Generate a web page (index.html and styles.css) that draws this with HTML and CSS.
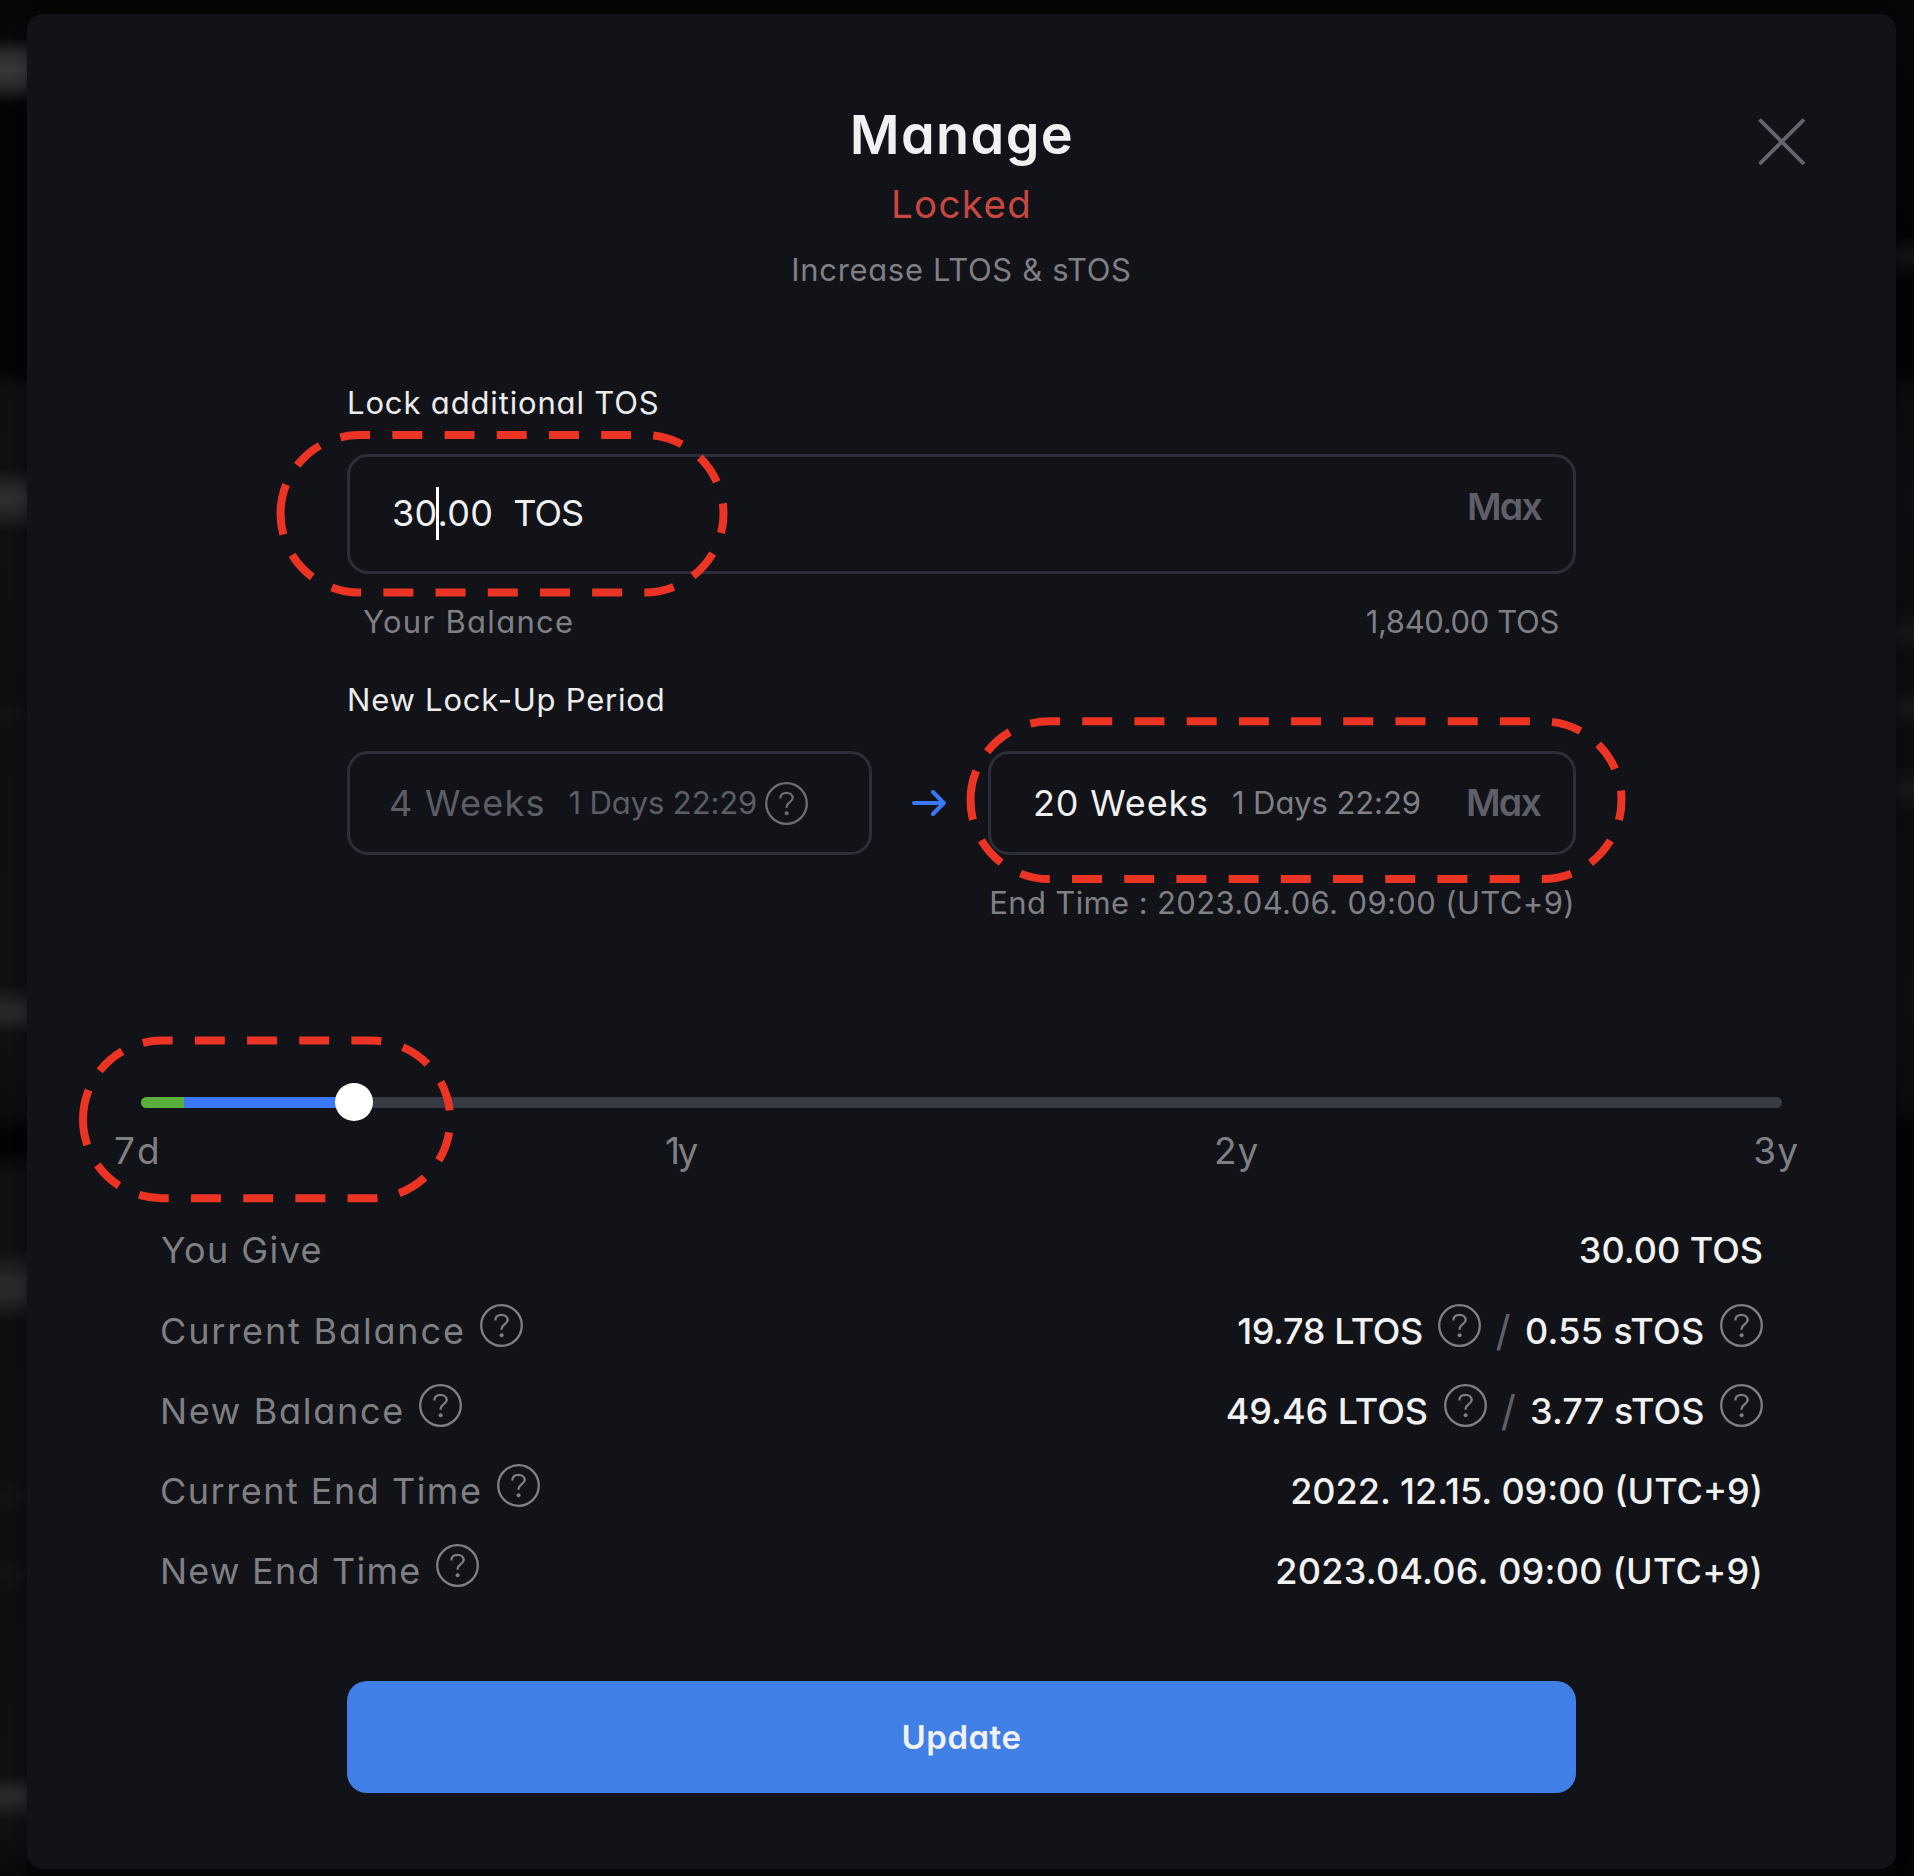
FILE: index.html
```html
<!DOCTYPE html>
<html lang="en">
<head>
<meta charset="utf-8">
<title>Manage</title>
<link rel="stylesheet" href="styles.css">
</head>
<body>
<svg class="defs" aria-hidden="true">
  <symbol id="help" viewBox="0 0 43 43">
    <circle cx="21.5" cy="21.5" r="20.3" fill="none" stroke="currentColor" stroke-width="2.3"/>
    <path d="M15.4 16.6V15.8C15.4 12.8 18 10.8 21.5 10.8S27.7 13 27.7 16.1C27.7 20 21.6 20.4 21.6 24.8V25.8" fill="none" stroke="currentColor" stroke-width="2.3"/>
    <circle cx="21.6" cy="31.2" r="2" fill="currentColor"/>
  </symbol>
</svg>
<div class="page">
  <div class="backdrop backdrop-left"></div>
  <main class="modal">
    <svg class="close" viewBox="0 0 48 48"><path d="M1.5 1.5 46 46M46 1.5 1.5 46"/></svg>
    <header class="head">
      <h1 class="title">Manage</h1>
      <p class="status">Locked</p>
      <p class="subtitle">Increase LTOS &amp; sTOS</p>
    </header>

    <section class="form">
      <h2 class="label label-amount">Lock additional TOS</h2>
      <div class="amount">
        <span class="value amount-int">30</span><span class="caret"></span><span class="value amount-dec">.00</span>
        <span class="value unit">TOS</span>
        <button class="max max-amount">Max</button>
      </div>
      <div class="balance"><span class="balance-name">Your Balance</span><span class="balance-value">1,840.00 TOS</span></div>
      <h2 class="label label-period">New Lock-Up Period</h2>
      <div class="periods">
        <div class="period period-old">
          <span class="weeks">4 Weeks</span><span class="days">1 Days 22:29</span><svg class="help"><use href="#help"/></svg>
        </div>
        <svg class="arrow" viewBox="0 0 34 26"><path d="M2 13H31.5M21 2 31.8 13 21 24"/></svg>
        <div class="period period-new">
          <span class="weeks">20 Weeks</span><span class="days">1 Days 22:29</span><button class="max">Max</button>
        </div>
      </div>
      <p class="end-time">End Time : 2023.04.06. 09:00 (UTC+9)</p>
    </section>

    <section class="slider">
      <div class="track"><span class="track-locked"></span><span class="track-new"></span><span class="thumb"></span></div>
      <div class="marks"><span class="mark-7d">7d</span><span class="mark-1y">1y</span><span class="mark-2y">2y</span><span class="mark-3y">3y</span></div>
    </section>

    <section class="summary">
      <div class="row"><span class="give">You Give</span><span class="figure">30.00 TOS</span></div>
      <div class="row"><span class="balance-current">Current Balance</span><svg class="help"><use href="#help"/></svg>
        <span class="figure tight">19.78 LTOS</span><svg class="help"><use href="#help"/></svg><span class="slash">/</span><span class="staked loose">0.55 sTOS</span><svg class="help"><use href="#help"/></svg></div>
      <div class="row"><span class="balance-new">New Balance</span><svg class="help"><use href="#help"/></svg>
        <span class="figure">49.46 LTOS</span><svg class="help"><use href="#help"/></svg><span class="slash">/</span><span class="staked">3.77 sTOS</span><svg class="help"><use href="#help"/></svg></div>
      <div class="row"><span class="end-current">Current End Time</span><svg class="help"><use href="#help"/></svg><span class="figure">2022. 12.15. 09:00 (UTC+9)</span></div>
      <div class="row"><span class="end-new">New End Time</span><svg class="help"><use href="#help"/></svg><span class="figure date-new">2023.04.06. 09:00 (UTC+9)</span></div>
    </section>

    <button class="update">Update</button>
  </main>
  <div class="backdrop backdrop-right"></div>

  <svg class="highlights" viewBox="0 0 1914 1876">
    <path d="M280.5 513.75A78.75 78.75 0 0 1 359.25 435H644.75A78.75 78.75 0 0 1 644.75 592.5H359.25A78.75 78.75 0 0 1 280.5 513.75"/>
    <path d="M970.5 800.2A78.9 78.9 0 0 1 1049.4 721.3H1542.6A78.9 78.9 0 0 1 1542.6 879.1H1049.4A78.9 78.9 0 0 1 970.5 800.2"/>
    <path d="M83 1119.4A78.8 78.8 0 0 1 161.8 1040.6H371.5A78.8 78.8 0 0 1 371.5 1198.2H161.8A78.8 78.8 0 0 1 83 1119.4"/>
  </svg>
</div>
</body>
</html>
```
FILE: styles.css
```css
* { box-sizing: border-box; margin: 0; padding: 0; }

body {
  background: #060606;
  font-family: Inter, "Noto Sans", sans-serif;
  font-feature-settings: "cv11";
  font-weight: 400;
  color: #7f7f84;
  white-space: nowrap;
}

button { background: none; border: 0; font: inherit; font-feature-settings: inherit; }

.defs { display: none; }

.page {
  position: relative;
  display: grid;
  grid-template-columns: 27px 1869px 18px;
  height: 1876px;
  overflow: hidden;
}

.backdrop-left {
  background: linear-gradient(#060606 0, #080808 38px, #2c2c2c 54px, #383838 69px, #2c2c2c 84px, #080808 102px, #040404 110px, #040404 370px, #0d0f11 390px, #0e1011 468px, #232425 485px, #2e2f30 499px, #232425 513px, #0e1011 532px, #0c0e10 700px, #101214 712px, #0d0f10 730px, #0e1011 985px, #262728 1008px, #262728 1016px, #0e1011 1035px, #0c0d0e 1110px, #030303 1135px, #030303 1150px, #0e1011 1175px, #0e1011 1250px, #28292a 1280px, #28292a 1294px, #0c0e0f 1322px, #0d0f10 1480px, #111213 1497px, #0c0e0f 1515px, #0c0e0f 1555px, #111213 1575px, #0c0e0f 1595px, #0e1011 1775px, #28292b 1793px, #28292b 1799px, #101113 1820px, #08090a 1876px);
}

.backdrop-right {
  background: linear-gradient(#070707 0, #040404 235px, #131313 257px, #040404 280px, #040404 370px, #0a0c0d 395px, #0d0f13 496px, #0b0d0e 610px, #161717 634px, #0b0d0e 655px, #0c0e0f 690px, #161717 708px, #0b0d0e 730px, #0b0d0e 765px, #171818 789px, #0b0d0e 812px, #0d0f11 1010px, #0a0c0d 1100px, #040404 1130px, #040404 1876px);
}

.modal {
  position: relative;
  display: flex;
  flex-direction: column;
  align-items: center;
  margin-top: 14px;
  height: 1855px;
  border-radius: 16px;
  background: #121318;
  box-shadow: 0 0 14px rgba(0, 0, 0, .4);
}

.close {
  position: absolute;
  top: 104px;
  right: 90.5px;
  width: 48px;
  height: 48px;
  fill: none;
  stroke: #65656f;
  stroke-width: 3.8;
}

.head { display: flex; flex-direction: column; align-items: center; padding-top: 89px; }
.title { font-size: 54px; line-height: 64px; font-weight: 600; letter-spacing: 1.4px; padding-left: 1px; color: #f1f1f1; }
.status { margin-top: 14px; font-size: 38.5px; line-height: 46px; letter-spacing: 1.35px; color: #c94741; }
.subtitle { margin-top: 24.4px; font-size: 31px; line-height: 38px; letter-spacing: .66px; }

.form { width: 1229px; margin-top: 94.3px; }
.label { font-size: 31px; line-height: 38px; font-weight: 400; color: #ececec; }
.label-amount { letter-spacing: .85px; }
.label-period { letter-spacing: .78px; margin-top: 40px; }

.amount {
  display: flex;
  align-items: center;
  height: 120px;
  margin-top: 32.6px;
  padding: 0 32px 2px 42px;
  border: 3px solid #2e2e3a;
  border-radius: 21px;
}
.value { font-size: 36px; line-height: 44px; margin-bottom: 1px; letter-spacing: .3px; color: #f0f0f0; }
.caret { width: 3px; height: 53px; margin: 0 -1.5px; background: #fff; }
.unit { margin-left: 20px; letter-spacing: -1px; }
.max { font-size: 37.5px; line-height: 44px; font-weight: 600; letter-spacing: -1.8px; color: #5f5f6a; }
.max-amount { margin: 0 0 12px auto; }

.balance { display: flex; justify-content: space-between; margin-top: 28.5px; padding: 0 17px 0 16px; font-size: 31px; line-height: 38px; }
.balance-name { letter-spacing: 1.3px; }
.balance-value { letter-spacing: -.35px; }

.periods { display: flex; align-items: center; margin-top: 32.6px; }
.period {
  display: flex;
  align-items: center;
  height: 104px;
  border: 3px solid #2e2e3a;
  border-radius: 21px;
}
.weeks { font-size: 36px; line-height: 44px; margin-bottom: 1px; }
.days { font-size: 31px; line-height: 44px; letter-spacing: -.1px; }
.period-old { width: 525px; padding-left: 39px; color: #5d5d66; }
.period-old .weeks { letter-spacing: 1.3px; }
.period-old .days { margin-left: 22.5px; }
.period-old .help { margin: 0 0 0 8px; color: #6d6d74; }
.arrow { width: 34px; height: 26px; margin: 0 42px 0 40px; fill: none; stroke: #3a78f7; stroke-width: 4; stroke-linecap: round; stroke-linejoin: round; }
.period-new { flex: 1; padding: 0 33px 0 42px; }
.period-new .weeks { letter-spacing: .85px; color: #f0f0f0; }
.period-new .days { margin-left: 23px; }
.period-new .max { margin-left: auto; }
.end-time { margin-top: 28.7px; padding-right: 1px; font-size: 31px; line-height: 38px; letter-spacing: .37px; text-align: right; }

.slider { width: 1641px; margin-top: 175.3px; }
.track { position: relative; display: flex; height: 11px; border-radius: 6px; background: #373b43; }
.track-locked { width: 43px; border-radius: 6px 0 0 6px; background: #5aaf3b; }
.track-new { width: 170px; background: #3a78f7; }
.thumb { position: absolute; left: 193.5px; top: -14px; width: 38px; height: 38px; border-radius: 50%; background: #fff; }
.marks { display: flex; margin: 21px -17px 0 -27px; font-size: 37px; line-height: 44px; }
.mark-7d { letter-spacing: 4px; width: 551px; }
.mark-1y { letter-spacing: -2.7px; width: 549px; }
.mark-2y { letter-spacing: 1px; }
.mark-3y { letter-spacing: 1px; margin-left: auto; }

.summary { width: 1603px; margin-top: 37px; }
.row { display: flex; align-items: center; height: 80.1px; font-size: 36px; line-height: 44px; }
.help { flex: none; width: 43px; height: 43px; margin: 0 0 11px 14.5px; color: #7f7f84; }
.give { letter-spacing: 1.4px; padding-left: 1px; }
.balance-current { letter-spacing: 1.85px; }
.balance-new { letter-spacing: 1.7px; }
.end-current { letter-spacing: 1.5px; }
.end-new { letter-spacing: 1.25px; }
.figure { margin-left: auto; font-weight: 500; color: #f1f1f1; }
.staked { font-weight: 500; color: #f1f1f1; letter-spacing: .1px; }
.figure + .help, .staked + .help { margin-left: 15.5px; }
.tight { letter-spacing: -.37px; }
.loose { letter-spacing: .3px; }
.date-new { letter-spacing: .25px; }
.slash { width: 43.5px; text-align: center; font-size: 42px; font-weight: 400; color: #5f5f68; }

.update {
  width: 1229px;
  height: 112px;
  margin-top: 70.2px;
  padding-bottom: 1px;
  border-radius: 20px;
  background: #4080e6;
  color: #f1f1f1;
  font-size: 33px;
  font-weight: 600;
  letter-spacing: .5px;
}

.highlights {
  position: absolute;
  inset: 0;
  width: 1914px;
  height: 1876px;
  pointer-events: none;
  fill: none;
  stroke: #ec3424;
  stroke-width: 8;
  stroke-dasharray: 30 22.2;
}
```
